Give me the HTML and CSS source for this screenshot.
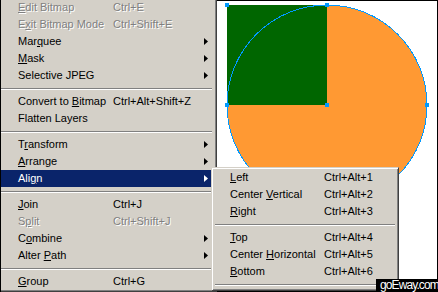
FILE: index.html
```html
<!DOCTYPE html>
<html>
<head>
    <title>Modify menu</title>
    <link rel="stylesheet" href="styles.css">
</head>
<body>
    <div class="screen">
        <svg class="canvas" viewBox="1 1 436 290" width="436" height="290">
            <circle cx="327" cy="105" r="100" fill="#ff9933"/>
            <rect x="227" y="5" width="100" height="100" fill="#006600"/>
            <circle cx="327" cy="105" r="100" fill="none" stroke="#0099ff" stroke-width="1" shape-rendering="crispEdges"/>
            <g fill="#0099ff">
                <rect x="225" y="3" width="4" height="4"/>
                <rect x="325" y="3" width="4" height="4"/>
                <rect x="225" y="103" width="4" height="4"/>
                <rect x="325" y="103" width="4" height="4"/>
                <rect x="425" y="103" width="4" height="4"/>
                <rect x="325" y="203" width="4" height="4"/>
            </g>
        </svg>

        <div class="menu main-menu">
            <div class="item disabled"><span class="label"><u>E</u>dit Bitmap</span><span class="key">Ctrl+E</span></div>
            <div class="item disabled"><span class="label">E<u>x</u>it Bitmap Mode</span><span class="key">Ctrl+Shift+E</span></div>
            <div class="item"><span class="label">Mar<u>q</u>uee</span><span class="key"></span><span class="arrow"></span></div>
            <div class="item"><span class="label"><u>M</u>ask</span><span class="key"></span><span class="arrow"></span></div>
            <div class="item"><span class="label">Selective JPEG</span><span class="key"></span><span class="arrow"></span></div>
            <div class="sep"></div>
            <div class="item"><span class="label">Convert to <u>B</u>itmap</span><span class="key">Ctrl+Alt+Shift+Z</span></div>
            <div class="item"><span class="label">Flatten Layers</span><span class="key"></span></div>
            <div class="sep"></div>
            <div class="item"><span class="label">T<u>r</u>ansform</span><span class="key"></span><span class="arrow"></span></div>
            <div class="item"><span class="label"><u>A</u>rrange</span><span class="key"></span><span class="arrow"></span></div>
            <div class="item active"><span class="label">Ali<u>g</u>n</span><span class="key"></span><span class="arrow"></span></div>
            <div class="sep"></div>
            <div class="item"><span class="label"><u>J</u>oin</span><span class="key">Ctrl+J</span></div>
            <div class="item disabled"><span class="label">S<u>p</u>lit</span><span class="key">Ctrl+Shift+J</span></div>
            <div class="item"><span class="label">C<u>o</u>mbine</span><span class="key"></span><span class="arrow"></span></div>
            <div class="item"><span class="label">Alter <u>P</u>ath</span><span class="key"></span><span class="arrow"></span></div>
            <div class="sep"></div>
            <div class="item"><span class="label"><u>G</u>roup</span><span class="key">Ctrl+G</span></div>
        </div>

        <div class="menu sub-menu">
            <div class="item"><span class="label"><u>L</u>eft</span><span class="key">Ctrl+Alt+1</span></div>
            <div class="item"><span class="label">Center <u>V</u>ertical</span><span class="key">Ctrl+Alt+2</span></div>
            <div class="item"><span class="label"><u>R</u>ight</span><span class="key">Ctrl+Alt+3</span></div>
            <div class="sep"></div>
            <div class="item"><span class="label"><u>T</u>op</span><span class="key">Ctrl+Alt+4</span></div>
            <div class="item"><span class="label">Center <u>H</u>orizontal</span><span class="key">Ctrl+Alt+5</span></div>
            <div class="item"><span class="label"><u>B</u>ottom</span><span class="key">Ctrl+Alt+6</span></div>
            <div class="sep"></div>
        </div>

        <div class="watermark">goEway.com</div>
    </div>
</body>
</html>
```

FILE: styles.css
```css
html, body {
    margin: 0;
    overflow: hidden;
}
body {
    font-family: "Liberation Sans", Arial, sans-serif;
    font-size: 11px;
}
.screen {
    position: relative;
    width: 438px;
    height: 292px;
    box-sizing: border-box;
    border: 1px solid #000;
    background: #fff;
}
.canvas {
    position: absolute;
    left: 0;
    top: 0;
}
.menu {
    position: absolute;
    display: flex;
    flex-direction: column;
    background: #d4d0c8;
}
.main-menu {
    top: -4px;
    left: 0;
    width: 211px;
    padding: 1px 4px 1px 0;
    border-top: 1px solid #d4d0c8;
    border-right: 1px solid #404040;
    border-bottom: 1px solid #404040;
    box-shadow: inset -1px -1px 0 #808080;
}
.sub-menu {
    top: 166px;
    left: 210px;
    width: 184px;
    padding: 1px;
    border: 1px solid;
    border-color: #d4d0c8 #404040 #404040 #d4d0c8;
    box-shadow: inset 1px 1px 0 #fff, inset -1px -1px 0 #808080;
}
.item {
    display: flex;
    align-items: center;
    height: 17px;
    line-height: 17px;
    padding-left: 17px;
    white-space: nowrap;
    color: #000;
}
.label {
    flex: none;
    width: 95px;
}
.sub-menu .label {
    width: 94px;
}
.key {
    flex: 1;
}
.arrow {
    width: 4px;
    height: 7px;
    margin-right: 4px;
    background: currentColor;
    clip-path: polygon(0 0, 100% 50%, 0 100%);
}
.item.active {
    background: #0a246a;
    color: #fff;
}
.item.disabled {
    color: #808080;
    text-shadow: 1px 1px 0 #fff;
}
.sep {
    height: 0;
    margin: 4px 0 3px;
    border-top: 1px solid #808080;
    border-bottom: 1px solid #fff;
}
.sub-menu .sep {
    margin: 4px 2px 3px;
}
.watermark {
    position: absolute;
    right: -1px;
    bottom: -1px;
    width: 58px;
    height: 13px;
    padding-left: 4px;
    background: #000;
    color: #fff;
    font-size: 12px;
    line-height: 13px;
    letter-spacing: -0.9px;
    white-space: nowrap;
    overflow: hidden;
}
```
